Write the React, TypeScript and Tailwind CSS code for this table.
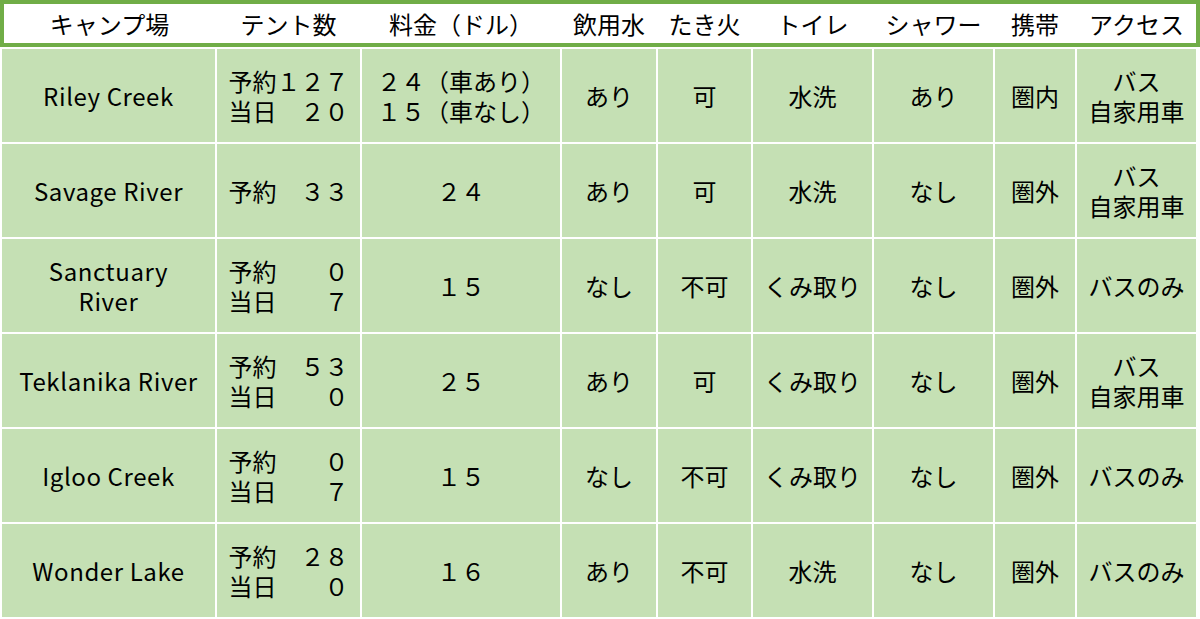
import React from 'react'

type Row = {
    name: string[]
    tents: string[]
    fee: string[]
    water: string
    fire: string
    toilet: string
    shower: string
    mobile: string
    access: string[]
}

const headers = ['キャンプ場', 'テント数', '料金（ドル）', '飲用水', 'たき火', 'トイレ', 'シャワー', '携帯', 'アクセス']

const rows: Row[] = [
    {
        name: ['Riley Creek'],
        tents: ['予約１２７', '当日　２０'],
        fee: ['２４（車あり）', '１５（車なし）'],
        water: 'あり',
        fire: '可',
        toilet: '水洗',
        shower: 'あり',
        mobile: '圏内',
        access: ['バス', '自家用車'],
    },
    {
        name: ['Savage River'],
        tents: ['予約　３３'],
        fee: ['２４'],
        water: 'あり',
        fire: '可',
        toilet: '水洗',
        shower: 'なし',
        mobile: '圏外',
        access: ['バス', '自家用車'],
    },
    {
        name: ['Sanctuary', 'River'],
        tents: ['予約　　０', '当日　　７'],
        fee: ['１５'],
        water: 'なし',
        fire: '不可',
        toilet: 'くみ取り',
        shower: 'なし',
        mobile: '圏外',
        access: ['バスのみ'],
    },
    {
        name: ['Teklanika River'],
        tents: ['予約　５３', '当日　　０'],
        fee: ['２５'],
        water: 'あり',
        fire: '可',
        toilet: 'くみ取り',
        shower: 'なし',
        mobile: '圏外',
        access: ['バス', '自家用車'],
    },
    {
        name: ['Igloo Creek'],
        tents: ['予約　　０', '当日　　７'],
        fee: ['１５'],
        water: 'なし',
        fire: '不可',
        toilet: 'くみ取り',
        shower: 'なし',
        mobile: '圏外',
        access: ['バスのみ'],
    },
    {
        name: ['Wonder Lake'],
        tents: ['予約　２８', '当日　　０'],
        fee: ['１６'],
        water: 'あり',
        fire: '不可',
        toilet: '水洗',
        shower: 'なし',
        mobile: '圏外',
        access: ['バスのみ'],
    },
]

const Cell: React.FC<{ lines: string[]; left?: boolean; latin?: boolean }> = ({ lines, left, latin }) => (
    <div className="bg-[#c5e0b4] flex items-center justify-center">
        <div
            className={`leading-[30px] whitespace-pre ${left ? 'text-left' : 'text-center'} ${
                latin ? 'tracking-[0.6px]' : ''
            }`}
        >
            {lines.map((l, i) => (
                <div key={i}>{l}</div>
            ))}
        </div>
    </div>
)

const App: React.FC = () => {
    return (
        <div className="w-[1200px] h-[619px] bg-white text-black text-[24px] font-['Noto_Sans_CJK_JP','Noto_Sans',sans-serif] overflow-hidden">
            {/* Header */}
            <div className="h-[47px] border-4 border-[#70ad47] bg-white">
                <div className="h-full grid grid-cols-[211px_143px_198px_94px_93px_119px_119px_80px_119px] gap-[2px]">
                    {headers.map((h) => (
                        <div key={h} className="flex items-center justify-center whitespace-nowrap leading-none">
                            {h}
                        </div>
                    ))}
                </div>
            </div>

            {/* Body */}
            <div className="mt-[2px] pl-[2px] grid grid-cols-[213px_143px_198px_94px_93px_119px_119px_80px_119px] auto-rows-[93px] gap-[2px]">
                {rows.map((r) => (
                    <React.Fragment key={r.name.join(' ')}>
                        <Cell lines={r.name} latin />
                        <Cell lines={r.tents} left />
                        <Cell lines={r.fee} left />
                        <Cell lines={[r.water]} />
                        <Cell lines={[r.fire]} />
                        <Cell lines={[r.toilet]} />
                        <Cell lines={[r.shower]} />
                        <Cell lines={[r.mobile]} />
                        <Cell lines={r.access} />
                    </React.Fragment>
                ))}
            </div>
        </div>
    )
}

export default App
